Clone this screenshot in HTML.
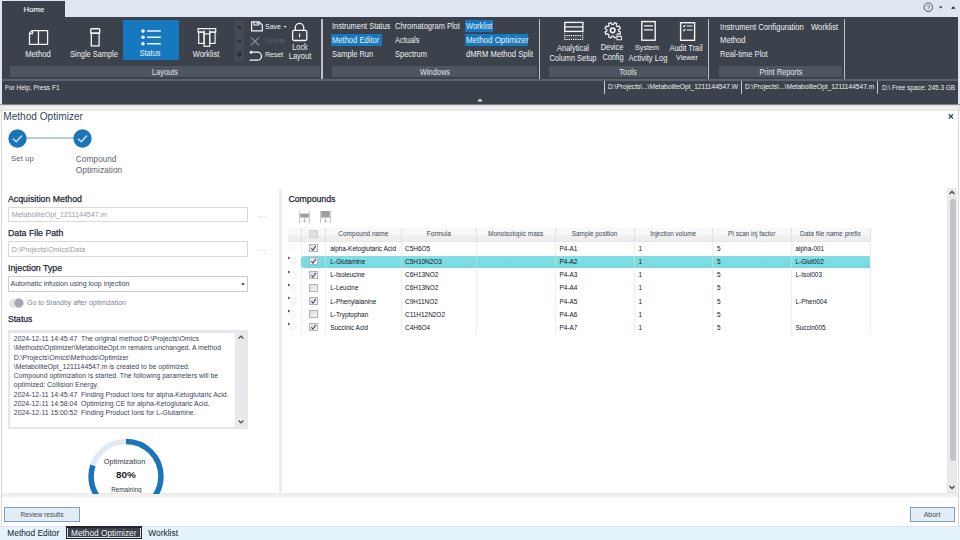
<!DOCTYPE html>
<html><head><meta charset="utf-8"><style>
html,body{margin:0;padding:0;}
body{width:960px;height:540px;overflow:hidden;position:relative;font-family:"Liberation Sans", sans-serif;background:#fff;}
svg{overflow:visible}
</style></head><body>
<div style="position:absolute;left:0px;top:0px;width:960px;height:104px;background:#e0e6f1"></div>
<div style="position:absolute;left:2px;top:1px;width:63px;height:16px;background:#3c424c"></div>
<div style="position:absolute;left:-466.1px;width:1000px;text-align:center;top:5.99px;font-size:7.75px;line-height:7.75px;color:#eef0f3;font-weight:400;white-space:nowrap;-webkit-text-stroke:0.15px #eef0f3">Home</div>
<svg style="position:absolute;left:922px;top:1px;" width="38" height="13" viewBox="0 0 38 13"><circle cx="6.3" cy="6.3" r="4.3" fill="none" stroke="#444" stroke-width="0.9"/><text x="6.3" y="9" font-size="7" text-anchor="middle" fill="#444" font-family="Liberation Sans">?</text><path d="M17 5.5 L20.5 5.5 L18.75 7.6 Z" fill="#222"/><path d="M29 7.8 L31.3 5.3 L33.6 7.8 Z" fill="#222"/></svg>
<div style="position:absolute;left:2px;top:17px;width:956px;height:87px;background:#3c424c"></div>
<div style="position:absolute;left:2px;top:79px;width:956px;height:2px;background:#5d636c"></div>
<div style="position:absolute;left:10px;top:66px;width:310px;height:11px;background:#4f5560"></div>
<div style="position:absolute;left:-335.0px;width:1000px;text-align:center;top:68.03px;font-size:8.29px;line-height:8.29px;color:#e2e4e8;font-weight:400;white-space:nowrap;transform:scaleX(0.8929);transform-origin:500px 0;">Layouts</div>
<div style="position:absolute;left:332px;top:66px;width:205px;height:11px;background:#4f5560"></div>
<div style="position:absolute;left:-65.5px;width:1000px;text-align:center;top:68.03px;font-size:8.29px;line-height:8.29px;color:#e2e4e8;font-weight:400;white-space:nowrap;transform:scaleX(0.8929);transform-origin:500px 0;">Windows</div>
<div style="position:absolute;left:549px;top:66px;width:158px;height:11px;background:#4f5560"></div>
<div style="position:absolute;left:128.0px;width:1000px;text-align:center;top:68.03px;font-size:8.29px;line-height:8.29px;color:#e2e4e8;font-weight:400;white-space:nowrap;transform:scaleX(0.8929);transform-origin:500px 0;">Tools</div>
<div style="position:absolute;left:719px;top:66px;width:123px;height:11px;background:#4f5560"></div>
<div style="position:absolute;left:280.5px;width:1000px;text-align:center;top:68.03px;font-size:8.29px;line-height:8.29px;color:#e2e4e8;font-weight:400;white-space:nowrap;transform:scaleX(0.8929);transform-origin:500px 0;">Print Reports</div>
<div style="position:absolute;left:321.4px;top:19px;width:1.3px;height:60px;background:#bcc2ca"></div>
<div style="position:absolute;left:539.1px;top:19px;width:1.3px;height:60px;background:#bcc2ca"></div>
<div style="position:absolute;left:708px;top:19px;width:1.3px;height:60px;background:#bcc2ca"></div>
<div style="position:absolute;left:843.8px;top:19px;width:1.3px;height:60px;background:#bcc2ca"></div>
<div style="position:absolute;left:123px;top:20px;width:55.6px;height:40px;background:#1679bf"></div>
<div style="position:absolute;left:-462px;width:1000px;text-align:center;top:49.59px;font-size:8.62px;line-height:8.62px;color:#eef0f3;font-weight:400;white-space:nowrap;transform:scaleX(0.8929);transform-origin:500px 0;">Method</div>
<div style="position:absolute;left:-406px;width:1000px;text-align:center;top:49.63px;font-size:8.29px;line-height:8.29px;color:#eef0f3;font-weight:400;white-space:nowrap;transform:scaleX(0.8929);transform-origin:500px 0;">Single Sample</div>
<div style="position:absolute;left:-350px;width:1000px;text-align:center;top:49.64px;font-size:8.18px;line-height:8.18px;color:#eef0f3;font-weight:400;white-space:nowrap;transform:scaleX(0.8929);transform-origin:500px 0;">Status</div>
<div style="position:absolute;left:-293.7px;width:1000px;text-align:center;top:49.61px;font-size:8.40px;line-height:8.40px;color:#eef0f3;font-weight:400;white-space:nowrap;transform:scaleX(0.8929);transform-origin:500px 0;">Worklist</div>
<svg style="position:absolute;left:27px;top:28px;" width="24" height="20" viewBox="0 0 24 20"><path d="M5.1 2.5 H20.6 V16.4 H2.5 V5.3 Z M11.45 2.5 V16.4" fill="none" stroke="#f4f4f4" stroke-width="1.25"/><path d="M2.8 5.6 H5.6 V2.6" fill="none" stroke="#f4f4f4" stroke-width="1.1"/></svg>
<svg style="position:absolute;left:88px;top:26px;" width="14" height="23" viewBox="0 0 14 23"><rect x="2.7" y="2.8" width="9" height="4.4" rx="0.8" fill="none" stroke="#f4f4f4" stroke-width="1.4"/><rect x="3.3" y="7.2" width="7.8" height="12.7" fill="none" stroke="#f4f4f4" stroke-width="1.3"/></svg>
<svg style="position:absolute;left:139px;top:27px;" width="24" height="20" viewBox="0 0 24 20"><circle cx="4" cy="4.1" r="1.8" fill="#f4f4f4"/><circle cx="4" cy="10.3" r="1.8" fill="#f4f4f4"/><circle cx="4" cy="16.7" r="1.8" fill="#f4f4f4"/><path d="M8 4.1 H21.8 M8 10.3 H21.8 M8 16.7 H21.8" stroke="#f4f4f4" stroke-width="1.5"/></svg>
<svg style="position:absolute;left:195px;top:26px;" width="24" height="23" viewBox="0 0 24 23"><g fill="none" stroke="#f4f4f4" stroke-width="1.2"><path d="M9.1 6.1 H3.1 V2.7 H20.7 V6.1 H14.7"/><rect x="3.7" y="6.1" width="5.4" height="11.3"/><rect x="14.7" y="6.1" width="5.4" height="11.3"/><rect x="9.1" y="7.9" width="5.6" height="12.4"/><path d="M9.1 7.9 V4.5 M14.7 7.9 V4.5"/></g></svg>
<div style="position:absolute;left:235px;top:19.5px;width:8.5px;height:41px;background:#454a53"></div>
<svg style="position:absolute;left:235px;top:19.5px;" width="9" height="41" viewBox="0 0 9 41"><path d="M2.6 8.3 L4.5 6.4 L6.4 8.3" fill="none" stroke="#23272d" stroke-width="1.2"/><path d="M2.6 19.8 L4.5 21.7 L6.4 19.8" fill="none" stroke="#23272d" stroke-width="1.2"/><path d="M2.6 32 L4.5 33.9 L6.4 32 M2.6 34.4 L4.5 36.3 L6.4 34.4" fill="none" stroke="#23272d" stroke-width="1.2"/></svg>
<svg style="position:absolute;left:249px;top:20px;" width="16" height="14" viewBox="0 0 16 14"><path d="M2.6 1.9 H10.2 L13.3 5 V10.8 H2.6 Z" fill="none" stroke="#f4f4f4" stroke-width="1.2"/><path d="M5 1.9 V5 H10 V1.9" fill="none" stroke="#f4f4f4" stroke-width="1.1"/><rect x="7.6" y="2.5" width="1.6" height="1.7" fill="#f4f4f4"/></svg>
<div style="position:absolute;left:265.3px;top:23.08px;font-size:7.84px;line-height:7.84px;color:#eef0f3;font-weight:400;white-space:nowrap;transform:scaleX(0.8929);transform-origin:0 0;">Save</div>
<svg style="position:absolute;left:282px;top:25px;" width="6" height="4" viewBox="0 0 6 4"><path d="M1.6 1 L4.6 1 L3.1 2.8 Z" fill="#f4f4f4"/></svg>
<svg style="position:absolute;left:249px;top:36px;" width="12" height="11" viewBox="0 0 12 11"><path d="M2 1.3 L10 9.3 M10 1.3 L2 9.3" stroke="#8b9097" stroke-width="1.2"/></svg>
<div style="position:absolute;left:265px;top:37.28px;font-size:7.84px;line-height:7.84px;color:#5b6068;font-weight:400;white-space:nowrap;transform:scaleX(0.8929);transform-origin:0 0;">Delete</div>
<svg style="position:absolute;left:247px;top:48px;" width="17" height="14" viewBox="0 0 17 14"><path d="M3.8 4.2 H10.5 A4 4 0 0 1 10.5 12.2 H2.6" fill="none" stroke="#f4f4f4" stroke-width="1.3"/><path d="M2 4.2 L4.9 2.2 L4.9 6.2 Z" fill="#f4f4f4"/></svg>
<div style="position:absolute;left:265px;top:51.48px;font-size:7.84px;line-height:7.84px;color:#eef0f3;font-weight:400;white-space:nowrap;transform:scaleX(0.8929);transform-origin:0 0;">Reset</div>
<svg style="position:absolute;left:290px;top:22px;" width="19" height="20" viewBox="0 0 19 20"><path d="M5.3 8.3 V5.6 A4.2 4.2 0 0 1 13.7 5.6 V8.3" fill="none" stroke="#f4f4f4" stroke-width="1.3"/><rect x="2.6" y="8.4" width="14.2" height="10.1" rx="1.4" fill="none" stroke="#f4f4f4" stroke-width="1.3"/><path d="M9.6 11.4 V15.2" stroke="#f4f4f4" stroke-width="1.1"/></svg>
<div style="position:absolute;left:-200.5px;width:1000px;text-align:center;top:43.64px;font-size:8.18px;line-height:8.18px;color:#eef0f3;font-weight:400;white-space:nowrap;transform:scaleX(0.8929);transform-origin:500px 0;">Lock</div>
<div style="position:absolute;left:-200.2px;width:1000px;text-align:center;top:51.61px;font-size:8.40px;line-height:8.40px;color:#eef0f3;font-weight:400;white-space:nowrap;transform:scaleX(0.8929);transform-origin:500px 0;">Layout</div>
<div style="position:absolute;left:331px;top:34px;width:51px;height:12px;background:#1679bf"></div>
<div style="position:absolute;left:465px;top:20px;width:28px;height:12px;background:#1679bf"></div>
<div style="position:absolute;left:465px;top:34px;width:63px;height:12px;background:#1679bf"></div>
<div style="position:absolute;left:332px;top:22.42px;font-size:8.34px;line-height:8.34px;color:#eef0f3;font-weight:400;white-space:nowrap;transform:scaleX(0.8929);transform-origin:0 0;">Instrument Status</div>
<div style="position:absolute;left:332px;top:36.30px;font-size:8.51px;line-height:8.51px;color:#eef0f3;font-weight:400;white-space:nowrap;transform:scaleX(0.8929);transform-origin:0 0;">Method Editor</div>
<div style="position:absolute;left:332px;top:50.31px;font-size:8.40px;line-height:8.40px;color:#eef0f3;font-weight:400;white-space:nowrap;transform:scaleX(0.8929);transform-origin:0 0;">Sample Run</div>
<div style="position:absolute;left:395px;top:22.41px;font-size:8.40px;line-height:8.40px;color:#eef0f3;font-weight:400;white-space:nowrap;transform:scaleX(0.8929);transform-origin:0 0;">Chromatogram Plot</div>
<div style="position:absolute;left:395px;top:36.31px;font-size:8.40px;line-height:8.40px;color:#eef0f3;font-weight:400;white-space:nowrap;transform:scaleX(0.8929);transform-origin:0 0;">Actuals</div>
<div style="position:absolute;left:395px;top:50.31px;font-size:8.40px;line-height:8.40px;color:#eef0f3;font-weight:400;white-space:nowrap;transform:scaleX(0.8929);transform-origin:0 0;">Spectrum</div>
<div style="position:absolute;left:465.5px;top:22.41px;font-size:8.40px;line-height:8.40px;color:#eef0f3;font-weight:400;white-space:nowrap;transform:scaleX(0.8929);transform-origin:0 0;">Worklist</div>
<div style="position:absolute;left:465.5px;top:36.25px;font-size:8.90px;line-height:8.90px;color:#eef0f3;font-weight:400;white-space:nowrap;transform:scaleX(0.8929);transform-origin:0 0;">Method Optimizer</div>
<div style="position:absolute;left:465.5px;top:50.30px;font-size:8.55px;line-height:8.55px;color:#eef0f3;font-weight:400;white-space:nowrap;transform:scaleX(0.8929);transform-origin:0 0;">dMRM Method Split</div>
<svg style="position:absolute;left:562px;top:19px;" width="24" height="24" viewBox="0 0 24 24"><rect x="2.8" y="3.4" width="18.1" height="9" fill="none" stroke="#f4f4f4" stroke-width="1.4"/><path d="M2.8 7.9 H20.9" stroke="#f4f4f4" stroke-width="1.3"/><path d="M2.2 16.6 H21.5 M2.2 20.4 H21.5" stroke="#f4f4f4" stroke-width="1.2" stroke-dasharray="1.3 0.9"/><path d="M2.1 14.4 H3.3 M20.4 14.4 H21.6 M2.1 18.5 H3.3 M20.4 18.5 H21.6" stroke="#f4f4f4" stroke-width="0.9"/></svg>
<svg style="position:absolute;left:604px;top:22px;" width="20" height="20" viewBox="0 0 20 20"><path d="M14.55 9.07 L16.38 10.14 L15.44 12.43 L13.38 11.89 L12.29 12.98 L12.83 15.04 L10.54 15.98 L9.47 14.15 L7.93 14.15 L6.86 15.98 L4.57 15.04 L5.11 12.98 L4.02 11.89 L1.96 12.43 L1.02 10.14 L2.85 9.07 L2.85 7.53 L1.02 6.46 L1.96 4.17 L4.02 4.71 L5.11 3.62 L4.57 1.56 L6.86 0.62 L7.93 2.45 L9.47 2.45 L10.54 0.62 L12.83 1.56 L12.29 3.62 L13.38 4.71 L15.44 4.17 L16.38 6.46 L14.55 7.53 Z" fill="none" stroke="#f4f4f4" stroke-width="1.25" stroke-linejoin="round"/><circle cx="8.7" cy="8.3" r="2.3" fill="none" stroke="#f4f4f4" stroke-width="1.6"/><rect x="12.4" y="12.3" width="6" height="6" fill="#3c424c"/><rect x="12.9" y="14.6" width="4.6" height="3.2" fill="none" stroke="#f4f4f4" stroke-width="0.9"/><path d="M13.8 14.6 V13.4 A1.4 1.4 0 0 1 16.6 13.4 V14.6" fill="none" stroke="#f4f4f4" stroke-width="0.9"/></svg>
<svg style="position:absolute;left:639px;top:19px;" width="19" height="24" viewBox="0 0 19 24"><rect x="2.8" y="2.6" width="13.4" height="18.6" fill="none" stroke="#f4f4f4" stroke-width="1.4"/><path d="M5 6.8 H14 M5 10.8 H14" stroke="#f4f4f4" stroke-width="1.3"/></svg>
<svg style="position:absolute;left:678px;top:20px;" width="19" height="22" viewBox="0 0 19 22"><rect x="2.6" y="2.7" width="14" height="17.6" fill="none" stroke="#f4f4f4" stroke-width="1.4"/><path d="M5 5.8 L6 6.8 L7.6 5 M5 9.8 L6 10.8 L7.6 9 M8.8 6 H14.5 M8.8 10 H14.5" fill="none" stroke="#f4f4f4" stroke-width="1.1"/></svg>
<div style="position:absolute;left:73px;width:1000px;text-align:center;top:44.22px;font-size:8.38px;line-height:8.38px;color:#eef0f3;font-weight:400;white-space:nowrap;transform:scaleX(0.8929);transform-origin:500px 0;">Analytical</div>
<div style="position:absolute;left:73px;width:1000px;text-align:center;top:54.32px;font-size:8.31px;line-height:8.31px;color:#eef0f3;font-weight:400;white-space:nowrap;transform:scaleX(0.8929);transform-origin:500px 0;">Column Setup</div>
<div style="position:absolute;left:112.29999999999995px;width:1000px;text-align:center;top:44.23px;font-size:8.24px;line-height:8.24px;color:#eef0f3;font-weight:400;white-space:nowrap;transform:scaleX(0.8929);transform-origin:500px 0;">Device</div>
<div style="position:absolute;left:112.5px;width:1000px;text-align:center;top:54.34px;font-size:8.18px;line-height:8.18px;color:#eef0f3;font-weight:400;white-space:nowrap;transform:scaleX(0.8929);transform-origin:500px 0;">Config</div>
<div style="position:absolute;left:147.39999999999998px;width:1000px;text-align:center;top:44.25px;font-size:8.06px;line-height:8.06px;color:#eef0f3;font-weight:400;white-space:nowrap;transform:scaleX(0.8929);transform-origin:500px 0;">System</div>
<div style="position:absolute;left:147.5px;width:1000px;text-align:center;top:54.30px;font-size:8.55px;line-height:8.55px;color:#eef0f3;font-weight:400;white-space:nowrap;transform:scaleX(0.8929);transform-origin:500px 0;">Activity Log</div>
<div style="position:absolute;left:186.39999999999998px;width:1000px;text-align:center;top:44.22px;font-size:8.37px;line-height:8.37px;color:#eef0f3;font-weight:400;white-space:nowrap;transform:scaleX(0.8929);transform-origin:500px 0;">Audit Trail</div>
<div style="position:absolute;left:186.5px;width:1000px;text-align:center;top:54.35px;font-size:8.11px;line-height:8.11px;color:#eef0f3;font-weight:400;white-space:nowrap;transform:scaleX(0.8929);transform-origin:500px 0;">Viewer</div>
<div style="position:absolute;left:720.3px;top:22.69px;font-size:8.59px;line-height:8.59px;color:#eef0f3;font-weight:400;white-space:nowrap;transform:scaleX(0.8929);transform-origin:0 0;">Instrument Configuration</div>
<div style="position:absolute;left:810.8px;top:22.69px;font-size:8.62px;line-height:8.62px;color:#eef0f3;font-weight:400;white-space:nowrap;transform:scaleX(0.8929);transform-origin:0 0;">Worklist</div>
<div style="position:absolute;left:720.3px;top:36.49px;font-size:8.62px;line-height:8.62px;color:#eef0f3;font-weight:400;white-space:nowrap;transform:scaleX(0.8929);transform-origin:0 0;">Method</div>
<div style="position:absolute;left:720.3px;top:50.30px;font-size:8.51px;line-height:8.51px;color:#eef0f3;font-weight:400;white-space:nowrap;transform:scaleX(0.8929);transform-origin:0 0;">Real-time Plot</div>
<div style="position:absolute;left:4.7px;top:84.48px;font-size:7.02px;line-height:7.02px;color:#eef0f3;font-weight:400;white-space:nowrap;transform:scaleX(0.9259);transform-origin:0 0;">For Help, Press F1</div>
<div style="position:absolute;left:604px;top:81px;width:1px;height:12.5px;background:#c8ccd2"></div>
<div style="position:absolute;left:741px;top:81px;width:1px;height:12.5px;background:#c8ccd2"></div>
<div style="position:absolute;left:877px;top:81px;width:1px;height:12.5px;background:#c8ccd2"></div>
<div style="position:absolute;left:607.8px;top:84.36px;font-size:7.13px;line-height:7.13px;color:#eef0f3;font-weight:400;white-space:nowrap;transform:scaleX(0.9259);transform-origin:0 0;">D:\Projects\...\MetaboliteOpt_1211144547.W</div>
<div style="position:absolute;left:745.4px;top:84.36px;font-size:7.13px;line-height:7.13px;color:#eef0f3;font-weight:400;white-space:nowrap;transform:scaleX(0.9259);transform-origin:0 0;">D:\Projects\...\MetaboliteOpt_1211144547.m</div>
<div style="position:absolute;left:881.7px;top:84.38px;font-size:6.98px;line-height:6.98px;color:#eef0f3;font-weight:400;white-space:nowrap;transform:scaleX(0.9259);transform-origin:0 0;">D:\ Free space: 245.3 GB</div>
<svg style="position:absolute;left:476px;top:97px;" width="8" height="6" viewBox="0 0 8 6"><path d="M1.2 4.4 L4 1.4 L6.8 4.4 Z" fill="#e6e8eb"/></svg>
<div style="position:absolute;left:0px;top:104px;width:960px;height:436px;background:#ffffff"></div>
<div style="position:absolute;left:0px;top:103.5px;width:960px;height:8px;background:linear-gradient(#3c424c 0px,#c4c6ca 1px,#f1f1f1 2px,#efefef 5px,#e0e0e0 6px,#ffffff 7.5px)"></div>
<div style="position:absolute;left:1px;top:104px;width:1px;height:422px;background:#d5d7da"></div>
<div style="position:absolute;left:958px;top:104px;width:1px;height:422px;background:#d5d7da"></div>
<div style="position:absolute;left:3.3px;top:111.81px;font-size:10.10px;line-height:10.10px;color:#34465a;font-weight:400;white-space:nowrap;">Method Optimizer</div>
<svg style="position:absolute;left:947px;top:112px;" width="8" height="8" viewBox="0 0 8 8"><path d="M1.8 2.2 L6 6.4 M6 2.2 L1.8 6.4" stroke="#3d4f6b" stroke-width="1.4"/></svg>
<div style="position:absolute;left:26px;top:137.4px;width:48px;height:1.8px;background:#b3cfe5"></div>
<svg style="position:absolute;left:6.600000000000001px;top:128px;" width="21" height="21" viewBox="0 0 21 21"><circle cx="10.5" cy="10.5" r="9.15" fill="#1b74b6"/><path d="M6 10.8 L9.2 13.8 L15 7.6" fill="none" stroke="#c4e4fa" stroke-width="1.5"/></svg>
<svg style="position:absolute;left:71.7px;top:128px;" width="21" height="21" viewBox="0 0 21 21"><circle cx="10.5" cy="10.5" r="9.15" fill="#1b74b6"/><path d="M6 10.8 L9.2 13.8 L15 7.6" fill="none" stroke="#c4e4fa" stroke-width="1.5"/></svg>
<div style="position:absolute;left:11.1px;top:154.58px;font-size:7.85px;line-height:7.85px;color:#5a6370;font-weight:400;white-space:nowrap;">Set up</div>
<div style="position:absolute;left:75.8px;top:155.22px;font-size:8.30px;line-height:8.30px;color:#5a6370;font-weight:400;white-space:nowrap;">Compound</div>
<div style="position:absolute;left:75.8px;top:165.62px;font-size:8.35px;line-height:8.35px;color:#5a6370;font-weight:400;white-space:nowrap;">Optimization</div>
<div style="position:absolute;left:279px;top:189px;width:3px;height:304px;background:#ededed"></div>
<div style="position:absolute;left:2px;top:493px;width:956px;height:4px;background:linear-gradient(#ececec,#f2f2f2)"></div>
<div style="position:absolute;left:8px;top:194.87px;font-size:8.76px;line-height:8.76px;color:#1f2b3a;font-weight:400;white-space:nowrap;-webkit-text-stroke:0.25px #1f2b3a">Acquisition Method</div>
<div style="position:absolute;left:8px;top:207px;width:240px;height:15px;background:#fff;border:1px solid #d6d9dd;box-sizing:border-box"></div>
<div style="position:absolute;left:11.7px;top:211.86px;font-size:7.15px;line-height:7.15px;color:#979ea8;font-weight:400;white-space:nowrap;">MetaboliteOpt_1211144547.m</div>
<svg style="position:absolute;left:256px;top:214px;" width="12" height="5" viewBox="0 0 12 5"><circle cx="3" cy="2.5" r="0.5" fill="#b3b8bf"/><circle cx="6" cy="2.5" r="0.5" fill="#b3b8bf"/><circle cx="9" cy="2.5" r="0.5" fill="#b3b8bf"/></svg>
<div style="position:absolute;left:8px;top:229.17px;font-size:8.74px;line-height:8.74px;color:#1f2b3a;font-weight:400;white-space:nowrap;-webkit-text-stroke:0.25px #1f2b3a">Data File Path</div>
<div style="position:absolute;left:8px;top:241px;width:240px;height:15.5px;background:#fff;border:1px solid #d6d9dd;box-sizing:border-box"></div>
<div style="position:absolute;left:11.7px;top:245.87px;font-size:7.07px;line-height:7.07px;color:#979ea8;font-weight:400;white-space:nowrap;">D:\Projects\Omics\Data</div>
<svg style="position:absolute;left:256px;top:248px;" width="12" height="5" viewBox="0 0 12 5"><circle cx="3" cy="2.5" r="0.5" fill="#b3b8bf"/><circle cx="6" cy="2.5" r="0.5" fill="#b3b8bf"/><circle cx="9" cy="2.5" r="0.5" fill="#b3b8bf"/></svg>
<div style="position:absolute;left:8px;top:264.17px;font-size:8.80px;line-height:8.80px;color:#1f2b3a;font-weight:400;white-space:nowrap;-webkit-text-stroke:0.25px #1f2b3a">Injection Type</div>
<div style="position:absolute;left:8px;top:276px;width:240px;height:15.5px;background:#fff;border:1px solid #c9cdd2;box-sizing:border-box"></div>
<div style="position:absolute;left:10.5px;top:280.38px;font-size:7.02px;line-height:7.02px;color:#3b4655;font-weight:400;white-space:nowrap;">Automatic infusion using loop injection</div>
<svg style="position:absolute;left:240.3px;top:281.5px;" width="7" height="5" viewBox="0 0 7 5"><path d="M1.2 1.3 L4.8 1.3 L3 3.4 Z" fill="#333"/></svg>
<div style="position:absolute;left:8.7px;top:298.5px;width:14.5px;height:9px;background:#e3e5e8;border-radius:5px"></div>
<svg style="position:absolute;left:12px;top:297px;" width="13" height="12" viewBox="0 0 13 12"><circle cx="6.9" cy="6" r="4.5" fill="#a3a7ae" stroke="#c4c7cc" stroke-width="0.8"/></svg>
<div style="position:absolute;left:27px;top:300.29px;font-size:6.93px;line-height:6.93px;color:#7d858f;font-weight:400;white-space:nowrap;">Go to Standby after optimization</div>
<div style="position:absolute;left:8px;top:315.29px;font-size:8.61px;line-height:8.61px;color:#1f2b3a;font-weight:400;white-space:nowrap;-webkit-text-stroke:0.25px #1f2b3a">Status</div>
<div style="position:absolute;left:8px;top:330px;width:240px;height:99px;background:#e4e6ea"></div>
<div style="position:absolute;left:10px;top:333px;width:224.5px;height:94px;background:#fff"></div>
<div style="position:absolute;left:234.5px;top:330px;width:13.5px;height:99px;background:#e7e9ed"></div>
<svg style="position:absolute;left:234px;top:333px;" width="14" height="8" viewBox="0 0 14 8"><path d="M4.6 5.5 L7 3.1 L9.4 5.5" fill="none" stroke="#555" stroke-width="1.3"/></svg>
<svg style="position:absolute;left:234px;top:418px;" width="14" height="8" viewBox="0 0 14 8"><path d="M4.6 2.5 L7 4.9 L9.4 2.5" fill="none" stroke="#555" stroke-width="1.3"/></svg>
<div style="position:absolute;left:13.8px;top:336.19px;font-size:6.90px;line-height:6.90px;color:#3a4458;font-weight:400;white-space:nowrap;">2024-12-11 14:45:47&nbsp; The original method D:\Projects\Omics</div>
<div style="position:absolute;left:13.8px;top:345.44px;font-size:6.90px;line-height:6.90px;color:#3a4458;font-weight:400;white-space:nowrap;">\Methods\Optimizer\MetaboliteOpt.m remains unchanged. A method</div>
<div style="position:absolute;left:13.8px;top:354.69px;font-size:6.90px;line-height:6.90px;color:#3a4458;font-weight:400;white-space:nowrap;">D:\Projects\Omics\Methods\Optimizer</div>
<div style="position:absolute;left:13.8px;top:363.94px;font-size:6.90px;line-height:6.90px;color:#3a4458;font-weight:400;white-space:nowrap;">\MetaboliteOpt_1211144547.m is created to be optimized.</div>
<div style="position:absolute;left:13.8px;top:373.19px;font-size:6.90px;line-height:6.90px;color:#3a4458;font-weight:400;white-space:nowrap;">Compound optimization is started. The following parameters will be</div>
<div style="position:absolute;left:13.8px;top:382.44px;font-size:6.90px;line-height:6.90px;color:#3a4458;font-weight:400;white-space:nowrap;">optimized: Collision Energy.</div>
<div style="position:absolute;left:13.8px;top:391.69px;font-size:6.90px;line-height:6.90px;color:#3a4458;font-weight:400;white-space:nowrap;">2024-12-11 14:45:47&nbsp; Finding Product Ions for alpha-Ketoglutaric Acid.</div>
<div style="position:absolute;left:13.8px;top:400.94px;font-size:6.90px;line-height:6.90px;color:#3a4458;font-weight:400;white-space:nowrap;">2024-12-11 14:58:04&nbsp; Optimizing CE for alpha-Ketoglutaric Acid.</div>
<div style="position:absolute;left:13.8px;top:410.19px;font-size:6.90px;line-height:6.90px;color:#3a4458;font-weight:400;white-space:nowrap;">2024-12-11 15:00:52&nbsp; Finding Product Ions for L-Glutamine.</div>
<div style="position:absolute;left:80px;top:430px;width:92px;height:63.5px;overflow:hidden">
<svg style="position:absolute;left:0px;top:0px;" width="92" height="64" viewBox="0 0 92 64"><circle cx="46" cy="46.30000000000001" r="34.9" fill="none" stroke="#e0eaf3" stroke-width="5.5"/><circle cx="46" cy="46.30000000000001" r="34.9" fill="none" stroke="#1b75bb" stroke-width="5.5" stroke-dasharray="175.43 219.28" transform="rotate(-90 46 46.30000000000001)"/></svg>
</div>
<div style="position:absolute;left:-375.5px;width:1000px;text-align:center;top:457.52px;font-size:7.50px;line-height:7.50px;color:#333a44;font-weight:400;white-space:nowrap;">Optimization</div>
<div style="position:absolute;left:-374px;width:1000px;text-align:center;top:470.44px;font-size:9.90px;line-height:9.90px;color:#1b1f25;font-weight:700;white-space:nowrap;">80%</div>
<div style="position:absolute;left:-373.6px;width:1000px;text-align:center;top:486.85px;font-size:6.40px;line-height:6.40px;color:#333a44;font-weight:400;white-space:nowrap;height:6px;overflow:hidden">Remaining</div>
<div style="position:absolute;left:288.4px;top:194.98px;font-size:8.72px;line-height:8.72px;color:#1f2b3a;font-weight:400;white-space:nowrap;-webkit-text-stroke:0.25px #1f2b3a">Compounds</div>
<svg style="position:absolute;left:299px;top:210px;" width="12" height="14" viewBox="0 0 12 14"><path d="M0.6 0.8 V13.2 M10.4 0.8 V13.2" stroke="#b9bcc0" stroke-width="0.9"/><rect x="1.3" y="3.6" width="8.4" height="4" fill="#9a9ea3"/><path d="M5.5 8 V12 M3.8 10.5 L5.5 12.2 L7.2 10.5" fill="none" stroke="#a8abb0" stroke-width="0.8"/></svg>
<svg style="position:absolute;left:320px;top:210px;" width="12" height="14" viewBox="0 0 12 14"><path d="M0.6 0.8 V13.2 M10.4 0.8 V13.2" stroke="#b9bcc0" stroke-width="0.9"/><rect x="1.3" y="1" width="8.4" height="6.6" fill="#9a9ea3"/><path d="M5.5 8 V12 M3.8 10.5 L5.5 12.2 L7.2 10.5" fill="none" stroke="#a8abb0" stroke-width="0.8"/></svg>
<div style="position:absolute;left:288px;top:228px;width:581.7px;height:13.5px;background:linear-gradient(#f8f8f8 0%,#f8f8f8 45%,#efefef 55%,#eeeeee 90%,#e1e1e1 100%)"></div>
<div style="position:absolute;left:300.5px;top:228px;width:1px;height:13.5px;background:#e0e0e0"></div>
<div style="position:absolute;left:300.5px;top:241.5px;width:1px;height:93.5px;background:#efefef"></div>
<div style="position:absolute;left:325.3px;top:228px;width:1px;height:13.5px;background:#e0e0e0"></div>
<div style="position:absolute;left:325.3px;top:241.5px;width:1px;height:93.5px;background:#efefef"></div>
<div style="position:absolute;left:401.25px;top:228px;width:1px;height:13.5px;background:#e0e0e0"></div>
<div style="position:absolute;left:401.25px;top:241.5px;width:1px;height:93.5px;background:#efefef"></div>
<div style="position:absolute;left:476.25px;top:228px;width:1px;height:13.5px;background:#e0e0e0"></div>
<div style="position:absolute;left:476.25px;top:241.5px;width:1px;height:93.5px;background:#efefef"></div>
<div style="position:absolute;left:555px;top:228px;width:1px;height:13.5px;background:#e0e0e0"></div>
<div style="position:absolute;left:555px;top:241.5px;width:1px;height:93.5px;background:#efefef"></div>
<div style="position:absolute;left:634.1px;top:228px;width:1px;height:13.5px;background:#e0e0e0"></div>
<div style="position:absolute;left:634.1px;top:241.5px;width:1px;height:93.5px;background:#efefef"></div>
<div style="position:absolute;left:712.1px;top:228px;width:1px;height:13.5px;background:#e0e0e0"></div>
<div style="position:absolute;left:712.1px;top:241.5px;width:1px;height:93.5px;background:#efefef"></div>
<div style="position:absolute;left:791.2px;top:228px;width:1px;height:13.5px;background:#e0e0e0"></div>
<div style="position:absolute;left:791.2px;top:241.5px;width:1px;height:93.5px;background:#efefef"></div>
<div style="position:absolute;left:869.7px;top:228px;width:1px;height:13.5px;background:#e0e0e0"></div>
<div style="position:absolute;left:869.7px;top:241.5px;width:1px;height:93.5px;background:#efefef"></div>
<div style="position:absolute;left:-136.72500000000002px;width:1000px;text-align:center;top:231.03px;font-size:6.52px;line-height:6.52px;color:#3a4555;font-weight:400;white-space:nowrap;">Compound name</div>
<div style="position:absolute;left:-61.25px;width:1000px;text-align:center;top:231.02px;font-size:6.60px;line-height:6.60px;color:#3a4555;font-weight:400;white-space:nowrap;">Formula</div>
<div style="position:absolute;left:15.625px;width:1000px;text-align:center;top:231.04px;font-size:6.45px;line-height:6.45px;color:#3a4555;font-weight:400;white-space:nowrap;">Monoisotopic mass</div>
<div style="position:absolute;left:94.54999999999995px;width:1000px;text-align:center;top:231.04px;font-size:6.45px;line-height:6.45px;color:#3a4555;font-weight:400;white-space:nowrap;">Sample position</div>
<div style="position:absolute;left:173.10000000000002px;width:1000px;text-align:center;top:231.05px;font-size:6.35px;line-height:6.35px;color:#3a4555;font-weight:400;white-space:nowrap;">Injection volume</div>
<div style="position:absolute;left:251.6500000000001px;width:1000px;text-align:center;top:231.05px;font-size:6.40px;line-height:6.40px;color:#3a4555;font-weight:400;white-space:nowrap;">PI scan inj factor</div>
<div style="position:absolute;left:330.45000000000005px;width:1000px;text-align:center;top:231.02px;font-size:6.65px;line-height:6.65px;color:#3a4555;font-weight:400;white-space:nowrap;">Data file name prefix</div>
<div style="position:absolute;left:309px;top:229.5px;width:8.7px;height:8.5px;background:#e0e0e0;border:1px solid #d2d2d2;box-sizing:border-box"></div>
<div style="position:absolute;left:309px;top:244.3px;width:8.7px;height:8px;background:linear-gradient(135deg,#dcdce4,#f4f4f8);border:1px solid #b1b3b9;box-sizing:border-box"></div>
<svg style="position:absolute;left:309px;top:244.3px;" width="9" height="8" viewBox="0 0 9 8"><path d="M2.4 4.4 L3.9 6.2 L6.8 1.9" fill="none" stroke="#41475a" stroke-width="1.05"/></svg>
<svg style="position:absolute;left:289px;top:243.3px;" width="9" height="9" viewBox="0 0 9 9"><circle cx="4" cy="4.5" r="2.4" fill="none" stroke="#eeeeee" stroke-width="1" stroke-dasharray="1 1"/></svg>
<div style="position:absolute;left:330.2px;top:245.94px;font-size:6.45px;line-height:6.45px;color:#0f131b;font-weight:400;white-space:nowrap;">alpha-Ketoglutaric Acid</div>
<div style="position:absolute;left:405px;top:245.94px;font-size:6.45px;line-height:6.45px;color:#0f131b;font-weight:400;white-space:nowrap;">C5H6O5</div>
<div style="position:absolute;left:559.5px;top:245.94px;font-size:6.45px;line-height:6.45px;color:#0f131b;font-weight:400;white-space:nowrap;">P4-A1</div>
<div style="position:absolute;left:638.4px;top:245.94px;font-size:6.45px;line-height:6.45px;color:#0f131b;font-weight:400;white-space:nowrap;">1</div>
<div style="position:absolute;left:717px;top:245.94px;font-size:6.45px;line-height:6.45px;color:#0f131b;font-weight:400;white-space:nowrap;">5</div>
<div style="position:absolute;left:795.5px;top:245.94px;font-size:6.45px;line-height:6.45px;color:#0f131b;font-weight:400;white-space:nowrap;">alpha-001</div>
<div style="position:absolute;left:301.3px;top:255.67px;width:568.4px;height:12px;background:linear-gradient(#82dee3,#77d8e1);border-radius:3px 0 0 3px"></div>
<div style="position:absolute;left:325.3px;top:255.67px;width:1px;height:12px;background:#a8e3e9"></div>
<div style="position:absolute;left:401.25px;top:255.67px;width:1px;height:12px;background:#a8e3e9"></div>
<div style="position:absolute;left:476.25px;top:255.67px;width:1px;height:12px;background:#a8e3e9"></div>
<div style="position:absolute;left:555px;top:255.67px;width:1px;height:12px;background:#a8e3e9"></div>
<div style="position:absolute;left:634.1px;top:255.67px;width:1px;height:12px;background:#a8e3e9"></div>
<div style="position:absolute;left:712.1px;top:255.67px;width:1px;height:12px;background:#a8e3e9"></div>
<div style="position:absolute;left:791.2px;top:255.67px;width:1px;height:12px;background:#a8e3e9"></div>
<div style="position:absolute;left:309px;top:257.47px;width:8.7px;height:8px;background:linear-gradient(135deg,#dcdce4,#f4f4f8);border:1px solid #b1b3b9;box-sizing:border-box"></div>
<svg style="position:absolute;left:309px;top:257.47px;" width="9" height="8" viewBox="0 0 9 8"><path d="M2.4 4.4 L3.9 6.2 L6.8 1.9" fill="none" stroke="#41475a" stroke-width="1.05"/></svg>
<svg style="position:absolute;left:287px;top:255.47px;" width="11" height="11" viewBox="0 0 11 11"><path d="M1.3 1.6 L3 3 L1.3 4.4 Z" fill="#111"/><circle cx="6" cy="6" r="3" fill="none" stroke="#cfcfcf" stroke-width="0.9" stroke-dasharray="1 1.2"/></svg>
<div style="position:absolute;left:330.2px;top:259.11px;font-size:6.45px;line-height:6.45px;color:#0f131b;font-weight:400;white-space:nowrap;">L-Glutamine</div>
<div style="position:absolute;left:405px;top:259.11px;font-size:6.45px;line-height:6.45px;color:#0f131b;font-weight:400;white-space:nowrap;">C5H10N2O3</div>
<div style="position:absolute;left:559.5px;top:259.11px;font-size:6.45px;line-height:6.45px;color:#0f131b;font-weight:400;white-space:nowrap;">P4-A2</div>
<div style="position:absolute;left:638.4px;top:259.11px;font-size:6.45px;line-height:6.45px;color:#0f131b;font-weight:400;white-space:nowrap;">1</div>
<div style="position:absolute;left:717px;top:259.11px;font-size:6.45px;line-height:6.45px;color:#0f131b;font-weight:400;white-space:nowrap;">5</div>
<div style="position:absolute;left:795.5px;top:259.11px;font-size:6.45px;line-height:6.45px;color:#0f131b;font-weight:400;white-space:nowrap;">L-Glut002</div>
<div style="position:absolute;left:309px;top:270.64px;width:8.7px;height:8px;background:linear-gradient(135deg,#dcdce4,#f4f4f8);border:1px solid #b1b3b9;box-sizing:border-box"></div>
<svg style="position:absolute;left:309px;top:270.64px;" width="9" height="8" viewBox="0 0 9 8"><path d="M2.4 4.4 L3.9 6.2 L6.8 1.9" fill="none" stroke="#41475a" stroke-width="1.05"/></svg>
<svg style="position:absolute;left:287px;top:268.64px;" width="11" height="11" viewBox="0 0 11 11"><path d="M1.3 1.6 L3 3 L1.3 4.4 Z" fill="#111"/><circle cx="6" cy="6" r="3" fill="none" stroke="#cfcfcf" stroke-width="0.9" stroke-dasharray="1 1.2"/></svg>
<div style="position:absolute;left:330.2px;top:272.28px;font-size:6.45px;line-height:6.45px;color:#0f131b;font-weight:400;white-space:nowrap;">L-Isoleucine</div>
<div style="position:absolute;left:405px;top:272.28px;font-size:6.45px;line-height:6.45px;color:#0f131b;font-weight:400;white-space:nowrap;">C6H13NO2</div>
<div style="position:absolute;left:559.5px;top:272.28px;font-size:6.45px;line-height:6.45px;color:#0f131b;font-weight:400;white-space:nowrap;">P4-A3</div>
<div style="position:absolute;left:638.4px;top:272.28px;font-size:6.45px;line-height:6.45px;color:#0f131b;font-weight:400;white-space:nowrap;">1</div>
<div style="position:absolute;left:717px;top:272.28px;font-size:6.45px;line-height:6.45px;color:#0f131b;font-weight:400;white-space:nowrap;">5</div>
<div style="position:absolute;left:795.5px;top:272.28px;font-size:6.45px;line-height:6.45px;color:#0f131b;font-weight:400;white-space:nowrap;">L-Isol003</div>
<div style="position:absolute;left:309px;top:283.81px;width:8.7px;height:8px;background:linear-gradient(135deg,#dcdce4,#f4f4f8);border:1px solid #b1b3b9;box-sizing:border-box"></div>
<svg style="position:absolute;left:287px;top:281.81px;" width="11" height="11" viewBox="0 0 11 11"><path d="M1.3 1.6 L3 3 L1.3 4.4 Z" fill="#111"/><circle cx="6" cy="6" r="3" fill="none" stroke="#cfcfcf" stroke-width="0.9" stroke-dasharray="1 1.2"/></svg>
<div style="position:absolute;left:330.2px;top:285.45px;font-size:6.45px;line-height:6.45px;color:#0f131b;font-weight:400;white-space:nowrap;">L-Leucine</div>
<div style="position:absolute;left:405px;top:285.45px;font-size:6.45px;line-height:6.45px;color:#0f131b;font-weight:400;white-space:nowrap;">C6H13NO2</div>
<div style="position:absolute;left:559.5px;top:285.45px;font-size:6.45px;line-height:6.45px;color:#0f131b;font-weight:400;white-space:nowrap;">P4-A4</div>
<div style="position:absolute;left:638.4px;top:285.45px;font-size:6.45px;line-height:6.45px;color:#0f131b;font-weight:400;white-space:nowrap;">1</div>
<div style="position:absolute;left:717px;top:285.45px;font-size:6.45px;line-height:6.45px;color:#0f131b;font-weight:400;white-space:nowrap;">5</div>
<div style="position:absolute;left:309px;top:296.98px;width:8.7px;height:8px;background:linear-gradient(135deg,#dcdce4,#f4f4f8);border:1px solid #b1b3b9;box-sizing:border-box"></div>
<svg style="position:absolute;left:309px;top:296.98px;" width="9" height="8" viewBox="0 0 9 8"><path d="M2.4 4.4 L3.9 6.2 L6.8 1.9" fill="none" stroke="#41475a" stroke-width="1.05"/></svg>
<svg style="position:absolute;left:287px;top:294.98px;" width="11" height="11" viewBox="0 0 11 11"><path d="M1.3 1.6 L3 3 L1.3 4.4 Z" fill="#111"/><circle cx="6" cy="6" r="3" fill="none" stroke="#cfcfcf" stroke-width="0.9" stroke-dasharray="1 1.2"/></svg>
<div style="position:absolute;left:330.2px;top:298.62px;font-size:6.45px;line-height:6.45px;color:#0f131b;font-weight:400;white-space:nowrap;">L-Phenylalanine</div>
<div style="position:absolute;left:405px;top:298.62px;font-size:6.45px;line-height:6.45px;color:#0f131b;font-weight:400;white-space:nowrap;">C9H11NO2</div>
<div style="position:absolute;left:559.5px;top:298.62px;font-size:6.45px;line-height:6.45px;color:#0f131b;font-weight:400;white-space:nowrap;">P4-A5</div>
<div style="position:absolute;left:638.4px;top:298.62px;font-size:6.45px;line-height:6.45px;color:#0f131b;font-weight:400;white-space:nowrap;">1</div>
<div style="position:absolute;left:717px;top:298.62px;font-size:6.45px;line-height:6.45px;color:#0f131b;font-weight:400;white-space:nowrap;">5</div>
<div style="position:absolute;left:795.5px;top:298.62px;font-size:6.45px;line-height:6.45px;color:#0f131b;font-weight:400;white-space:nowrap;">L-Phen004</div>
<div style="position:absolute;left:309px;top:310.15px;width:8.7px;height:8px;background:linear-gradient(135deg,#dcdce4,#f4f4f8);border:1px solid #b1b3b9;box-sizing:border-box"></div>
<svg style="position:absolute;left:287px;top:308.15px;" width="11" height="11" viewBox="0 0 11 11"><path d="M1.3 1.6 L3 3 L1.3 4.4 Z" fill="#111"/><circle cx="6" cy="6" r="3" fill="none" stroke="#cfcfcf" stroke-width="0.9" stroke-dasharray="1 1.2"/></svg>
<div style="position:absolute;left:330.2px;top:311.79px;font-size:6.45px;line-height:6.45px;color:#0f131b;font-weight:400;white-space:nowrap;">L-Tryptophan</div>
<div style="position:absolute;left:405px;top:311.79px;font-size:6.45px;line-height:6.45px;color:#0f131b;font-weight:400;white-space:nowrap;">C11H12N2O2</div>
<div style="position:absolute;left:559.5px;top:311.79px;font-size:6.45px;line-height:6.45px;color:#0f131b;font-weight:400;white-space:nowrap;">P4-A6</div>
<div style="position:absolute;left:638.4px;top:311.79px;font-size:6.45px;line-height:6.45px;color:#0f131b;font-weight:400;white-space:nowrap;">1</div>
<div style="position:absolute;left:717px;top:311.79px;font-size:6.45px;line-height:6.45px;color:#0f131b;font-weight:400;white-space:nowrap;">5</div>
<div style="position:absolute;left:309px;top:323.32px;width:8.7px;height:8px;background:linear-gradient(135deg,#dcdce4,#f4f4f8);border:1px solid #b1b3b9;box-sizing:border-box"></div>
<svg style="position:absolute;left:309px;top:323.32px;" width="9" height="8" viewBox="0 0 9 8"><path d="M2.4 4.4 L3.9 6.2 L6.8 1.9" fill="none" stroke="#41475a" stroke-width="1.05"/></svg>
<svg style="position:absolute;left:287px;top:321.32px;" width="11" height="11" viewBox="0 0 11 11"><path d="M1.3 1.6 L3 3 L1.3 4.4 Z" fill="#111"/><circle cx="6" cy="6" r="3" fill="none" stroke="#cfcfcf" stroke-width="0.9" stroke-dasharray="1 1.2"/></svg>
<div style="position:absolute;left:330.2px;top:324.96px;font-size:6.45px;line-height:6.45px;color:#0f131b;font-weight:400;white-space:nowrap;">Succinic Acid</div>
<div style="position:absolute;left:405px;top:324.96px;font-size:6.45px;line-height:6.45px;color:#0f131b;font-weight:400;white-space:nowrap;">C4H6O4</div>
<div style="position:absolute;left:559.5px;top:324.96px;font-size:6.45px;line-height:6.45px;color:#0f131b;font-weight:400;white-space:nowrap;">P4-A7</div>
<div style="position:absolute;left:638.4px;top:324.96px;font-size:6.45px;line-height:6.45px;color:#0f131b;font-weight:400;white-space:nowrap;">1</div>
<div style="position:absolute;left:717px;top:324.96px;font-size:6.45px;line-height:6.45px;color:#0f131b;font-weight:400;white-space:nowrap;">5</div>
<div style="position:absolute;left:795.5px;top:324.96px;font-size:6.45px;line-height:6.45px;color:#0f131b;font-weight:400;white-space:nowrap;">Succin005</div>
<div style="position:absolute;left:946.7px;top:187.5px;width:10.3px;height:306.5px;background:#e8e9eb"></div>
<div style="position:absolute;left:949.6px;top:198.5px;width:6.7px;height:262px;background:#c2c4c8;border-radius:3px"></div>
<svg style="position:absolute;left:947px;top:188px;" width="10" height="9" viewBox="0 0 10 9"><path d="M2.5 6 L5 3.5 L7.5 6" fill="none" stroke="#444" stroke-width="1.3"/></svg>
<svg style="position:absolute;left:947px;top:483px;" width="10" height="9" viewBox="0 0 10 9"><path d="M2.5 3 L5 5.5 L7.5 3" fill="none" stroke="#444" stroke-width="1.3"/></svg>
<div style="position:absolute;left:4.4px;top:507px;width:75.6px;height:15px;background:#e3edf8;border:1px solid #7d9fc2;box-sizing:border-box"></div>
<div style="position:absolute;left:-457.6px;width:1000px;text-align:center;top:511.48px;font-size:7.01px;line-height:7.01px;color:#434952;font-weight:400;white-space:nowrap;transform:scaleX(0.9434);transform-origin:500px 0;">Review results</div>
<div style="position:absolute;left:909.8px;top:507px;width:45.5px;height:14.7px;background:#e3edf8;border:1px solid #7d9fc2;box-sizing:border-box"></div>
<div style="position:absolute;left:432.4px;width:1000px;text-align:center;top:511.43px;font-size:7.41px;line-height:7.41px;color:#434952;font-weight:400;white-space:nowrap;transform:scaleX(0.9434);transform-origin:500px 0;">Abort</div>
<div style="position:absolute;left:0px;top:526px;width:960px;height:14px;background:#e4f2fc"></div>
<div style="position:absolute;left:0px;top:526px;width:960px;height:0.5px;background:#dbe6ef"></div>
<div style="position:absolute;left:7.3px;top:528.82px;font-size:8.35px;line-height:8.35px;color:#151b2a;font-weight:400;white-space:nowrap;">Method Editor</div>
<div style="position:absolute;left:66px;top:526px;width:75.5px;height:13px;background:#3b4049;border:1px solid #23272d;border-top-width:2px;box-sizing:border-box;box-shadow:inset 1px 0 0 #d9dee4, inset 0 -1px 0 #d9dee4, inset -1px 0 0 #d9dee4"></div>
<div style="position:absolute;left:71px;top:528.82px;font-size:8.31px;line-height:8.31px;color:#f2f3f5;font-weight:400;white-space:nowrap;">Method Optimizer</div>
<div style="position:absolute;left:148.2px;top:528.81px;font-size:8.45px;line-height:8.45px;color:#151b2a;font-weight:400;white-space:nowrap;">Worklist</div>
</body></html>
